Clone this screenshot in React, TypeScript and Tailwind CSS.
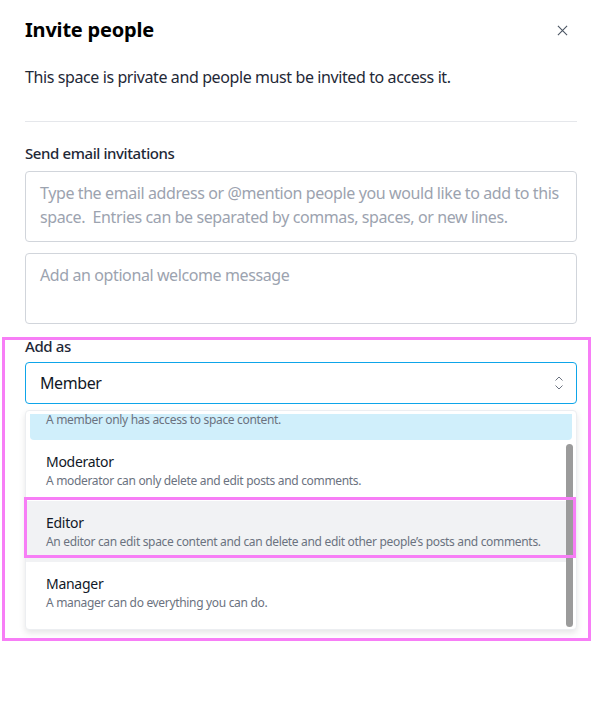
import React from "react";

const font = { fontFamily: '"Noto Sans", "Open Sans", sans-serif' };

function Item({ title, desc, className = "" }: { title: string; desc: string; className?: string }) {
  return (
    <div className={`pt-[12px] pb-[12px] ${className}`}>
      <div className="text-[14px] leading-[20px] text-[#111827] tracking-[-0.02em]">{title}</div>
      <div className="mt-[1px] whitespace-nowrap text-[12px] leading-[16px] text-[#6b7280] tracking-[-0.027em]">{desc}</div>
    </div>
  );
}

export default function App() {
  return (
    <div className="relative w-[597px] h-[706px] bg-white tracking-[-0.025em]" style={font}>
      <div className="pl-[25px] pr-[20px] pt-[16px]">
        <div className="flex items-center justify-between">
          <h1 className="text-[20px] leading-[28px] font-bold text-black tracking-[-0.01em]">Invite people</h1>
          <svg width="11" height="11" viewBox="0 0 12 12" className="mr-[9px] text-[#4b5563]">
            <path d="M1 1L11 11M11 1L1 11" stroke="currentColor" strokeWidth="1.2" />
          </svg>
        </div>
        <p className="mt-[21px] text-[16px] leading-[24px] text-[#1f2937]">
          This space is private and people must be invited to access it.
        </p>
        <div className="mt-[32px] h-px bg-[#e5e7eb]" />
        <div className="mt-[19px] text-[15px] leading-[24px] font-medium text-[#1f2937]">Send email invitations</div>
        <div className="mt-[6px] h-[71px] rounded-[4px] border border-[#d1d5db] px-[14px] pt-[9px] text-[16px] leading-[24px] text-[#9ca3af]">
          Type the email address or @mention people you would like to add to this space.&nbsp; Entries can be separated by commas, spaces, or new lines.
        </div>
        <div className="mt-[11px] h-[71px] rounded-[4px] border border-[#d1d5db] px-[14px] pt-[9px] text-[16px] leading-[24px] text-[#9ca3af]">
          Add an optional welcome message
        </div>
        <div className="mt-[10px] text-[15px] leading-[24px] font-medium text-[#1f2937]">Add as</div>
        <div className="mt-[4px] flex h-[42px] items-center justify-between rounded-[4px] border border-[#0ea5e9] pl-[14px] pr-[12px]">
          <span className="text-[16px] text-[#111827]">Member</span>
          <svg width="10" height="16" viewBox="0 0 10 16" className="text-[#6b7280]">
            <path d="M1.5 5.5L5 2L8.5 5.5M1.5 10.5L5 14L8.5 10.5" fill="none" stroke="currentColor" strokeWidth="1" />
          </svg>
        </div>
        <div className="relative mt-[6px] h-[220px] rounded-[4px] border border-[#eceef1] bg-white shadow-[0_3px_6px_rgba(0,0,0,0.10)] pt-[3px]">
          <div className="h-[214px] overflow-hidden">
            <div className="-mt-[35px]">
              <Item title="Member" desc="A member only has access to space content." className="ml-[4px] mr-[4px] rounded-[4px] bg-[#d0effb] px-[16px]" />
              <Item title="Moderator" desc="A moderator can only delete and edit posts and comments." className="px-[20px]" />
              <Item title="Editor" desc="An editor can edit space content and can delete and edit other people’s posts and comments." className="bg-[#f1f2f4] mr-[4px] px-[20px]" />
              <Item title="Manager" desc="A manager can do everything you can do." className="px-[20px]" />
            </div>
          </div>
          <div className="absolute right-[3px] top-[33px] bottom-[2px] w-[7px] rounded-full bg-[#9b9b9b]" />
        </div>
      </div>
      <div className="pointer-events-none absolute left-[2px] top-[337px] w-[589px] h-[304px] border-[3px] border-[#f77ef6]" />
      <div className="pointer-events-none absolute left-[24px] top-[497px] w-[552px] h-[61px] border-[3px] border-[#f77ef6]" />
    </div>
  );
}
